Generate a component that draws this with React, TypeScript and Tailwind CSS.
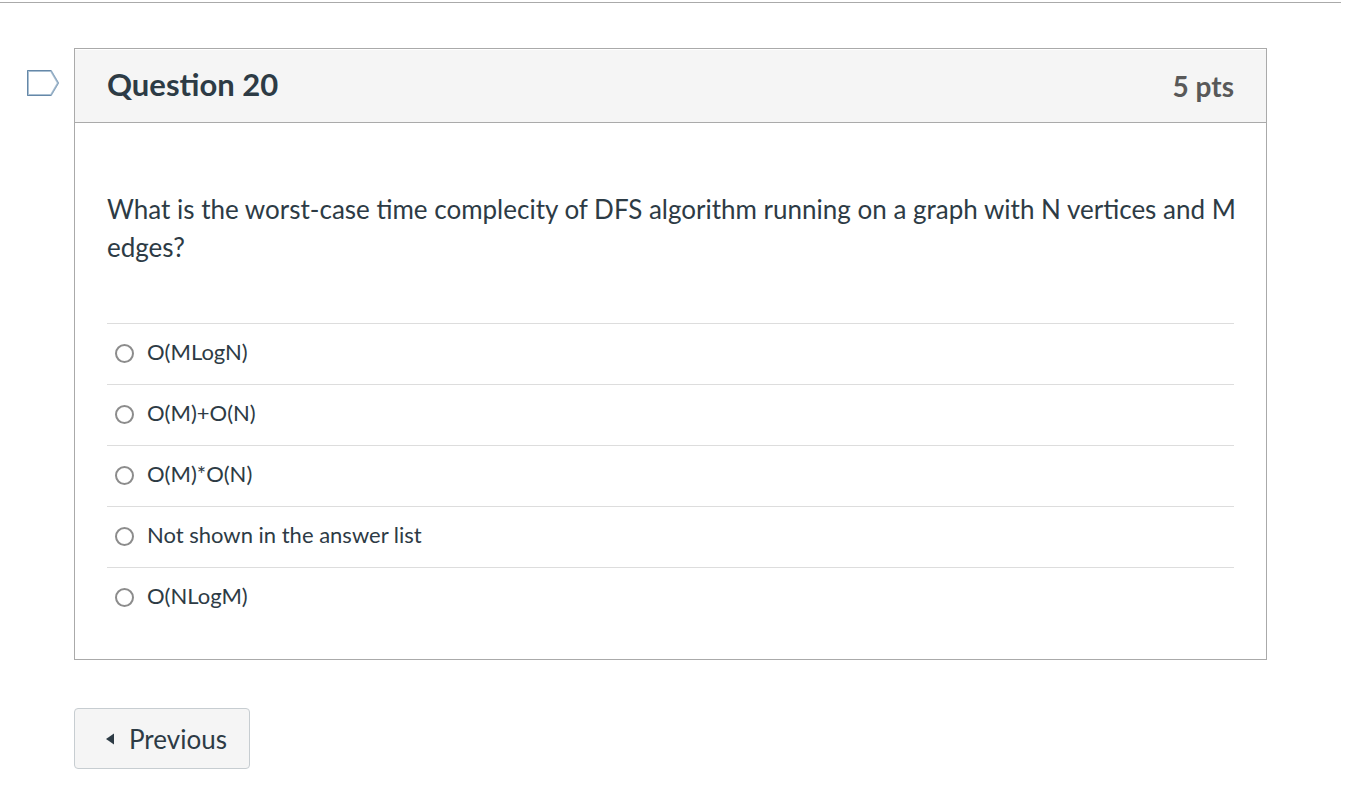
import { useState } from "react"

const answers = [
    { id: "a1", text: "O(MLogN)" },
    { id: "a2", text: "O(M)+O(N)" },
    { id: "a3", text: "O(M)*O(N)" },
    { id: "a4", text: "Not shown in the answer list" },
    { id: "a5", text: "O(NLogM)" },
]

const FlagButton = () => {

    const [flagged, setFlagged] = useState(false)

    return (
        <button
            type="button"
            aria-label="Flag question"
            aria-pressed={flagged}
            onClick={() => setFlagged(!flagged)}
            className="mt-[21px] h-[28px] w-[34px] shrink-0"
        >
            <svg viewBox="0 0 34 28" className="block h-full w-full">
                <path d="M2 2H25L32 14L25 26H2Z" fill={flagged ? "#fc5e13" : "#ffffff"} stroke="#a9bfd2" strokeWidth="2" />
                <path d="M25 1.5H1.5V26.5H25" fill="none" stroke="#6588a8" strokeWidth="1" />
                <path d="M25 1.5L32.5 14L25 26.5" fill="none" stroke="#8ba6bf" strokeWidth="1" />
            </svg>
        </button>
    )
}

const Question = () => {

    const [selected, setSelected] = useState("")

    return (
        <section className="min-w-0 flex-1 border border-[#aaaaaa] bg-white">

            <header className="flex h-[74px] items-center justify-between border-t border-b border-t-white border-b-[#aaaaaa] bg-[#f5f5f5] px-8">
                <h2 className="pb-1 text-[31px] leading-10 font-bold">Question 20</h2>
                <span className="pb-px text-[28px] leading-10 font-bold text-[#595959]">5 pts</span>
            </header>

            <div className="px-8 pt-[67px] pb-[31px]">

                <p id="question-text" className="-mr-2 text-[26px] leading-[38px]">
                    What is the worst-case time complecity of DFS algorithm running on a graph with N vertices and M edges?
                </p>

                <div role="radiogroup" aria-labelledby="question-text" className="mt-[57px]">
                    {
                        answers.map((answer) => (
                            <div key={answer.id} className="flex h-[61px] items-center border-t border-[#dddddd] pb-[2px] pl-2">
                                <input
                                    type="radio"
                                    id={answer.id}
                                    name="question-20"
                                    checked={selected === answer.id}
                                    onChange={() => setSelected(answer.id)}
                                    className="h-[19px] w-[19px] shrink-0 appearance-none rounded-full border-2 border-[#8c8c8c] bg-white checked:border-[6px] checked:border-[#0374b5]"
                                />
                                <label htmlFor={answer.id} className="pb-[3px] pl-[13px] text-[22px] leading-8">{answer.text}</label>
                            </div>
                        ))
                    }
                </div>

            </div>

        </section>
    )
}

const App = () => {
    return (
        <main className="pt-[2px] font-['Lato',sans-serif] text-[#2d3b45]">

            <div className="mr-[15px] border-t border-[#aaaaaa]" />

            <div className="mt-[45px] mr-[89px] ml-[26px] flex items-start gap-[14px]">
                <FlagButton />
                <Question />
            </div>

            <div className="mt-12 ml-[74px]">
                <button type="button" className="flex h-[61px] items-center rounded-[4px] border border-[#c7cdd1] bg-[#f5f5f5] pr-[22px] pl-[31px] text-[26px] leading-10">
                    <svg viewBox="0 0 8 12" className="mr-[15px] h-3 w-2" aria-hidden="true">
                        <path d="M8 0.5V11.5L0 6Z" fill="#2d3b45" />
                    </svg>
                    <span className="pt-px">Previous</span>
                </button>
            </div>

        </main>
    )
}

export default App
